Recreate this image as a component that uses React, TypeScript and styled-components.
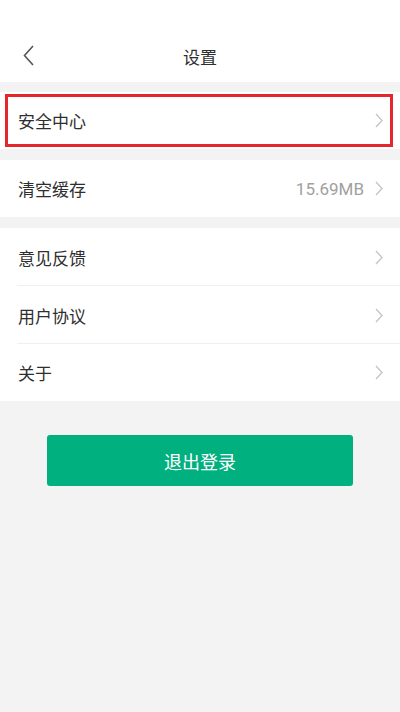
import React from 'react'
import styled, { createGlobalStyle } from 'styled-components'

const GlobalStyle = createGlobalStyle`
  html, body {
    margin: 0;
    padding: 0;
    background: #f3f3f3;
  }
  body {
    font-family: Roboto, "Noto Sans CJK SC", sans-serif;
    -webkit-font-smoothing: antialiased;
  }
`

const Page = styled.div`
  width: 400px;
  min-height: 712px;
  background: #f3f3f3;
  display: flex;
  flex-direction: column;
`

const Header = styled.header`
  height: 52px;
  padding-top: 30px;
  background: #fff;
  display: flex;
  align-items: center;
  justify-content: center;
  position: relative;
`

const BackButton = styled.button`
  position: absolute;
  left: 18px;
  top: 40px;
  width: 20px;
  height: 30px;
  border: 0;
  padding: 0;
  background: transparent;
  display: flex;
  align-items: center;
  justify-content: center;
`

const Title = styled.h1`
  margin: 0;
  font-size: 17px;
  font-weight: 400;
  color: #2e2e2e;
`

const Section = styled.section<{ gap: number }>`
  margin-top: ${({ gap }) => gap}px;
  background: #fff;
`

const Row = styled.div<{ last?: boolean }>`
  height: ${({ last }) => (last ? 57 : 58)}px;
  display: flex;
  align-items: center;
  padding: 0 17px 0 18px;
  position: relative;
  box-sizing: border-box;

  &::after {
    content: '';
    display: ${({ last }) => (last ? 'none' : 'block')};
    position: absolute;
    left: 17px;
    right: 0;
    bottom: 0;
    height: 1px;
    background: #f0f0f0;
  }
`

const Label = styled.span`
  flex: 1;
  font-size: 17px;
  color: #2e2e2e;
`

const Value = styled.span`
  font-size: 17px;
  color: #a0a0a0;
  margin-right: 11px;
`

const Highlight = styled.div`
  position: absolute;
  left: 5px;
  right: 7px;
  top: 2px;
  bottom: 2px;
  border: 3px solid #e6262d;
  pointer-events: none;
`

const LogoutButton = styled.button`
  margin: 34px auto 0;
  width: 306px;
  height: 51px;
  border: 0;
  border-radius: 3px;
  background: #00b07e;
  color: #fff;
  font-family: inherit;
  font-size: 18px;
  font-weight: 400;
  cursor: pointer;
`

const Chevron = () => (
  <svg width="8" height="15" viewBox="0 0 8 15">
    <path d="M1 1 L7 7.5 L1 14" fill="none" stroke="#c4c4c4" strokeWidth="1.3" />
  </svg>
)

const BackIcon = () => (
  <svg width="11" height="21" viewBox="0 0 11 21">
    <path d="M10 1 L1.5 10.5 L10 20" fill="none" stroke="#555" strokeWidth="1.6" />
  </svg>
)

type Item = { label: string; value?: string }

const groups: { gap: number; items: Item[]; highlight?: boolean }[] = [
  { gap: 10, items: [{ label: '安全中心' }], highlight: true },
  { gap: 11, items: [{ label: '清空缓存', value: '15.69MB' }] },
  { gap: 11, items: [{ label: '意见反馈' }, { label: '用户协议' }, { label: '关于' }] },
]

export default function App() {
  return (
    <Page>
      <GlobalStyle />
      <Header>
        <BackButton aria-label="返回">
          <BackIcon />
        </BackButton>
        <Title>设置</Title>
      </Header>
      {groups.map((g, gi) => (
        <Section key={gi} gap={g.gap}>
          {g.items.map((item, i) => (
            <Row key={item.label} last={i === g.items.length - 1}>
              <Label>{item.label}</Label>
              {item.value && <Value>{item.value}</Value>}
              <Chevron />
              {g.highlight && <Highlight />}
            </Row>
          ))}
        </Section>
      ))}
      <LogoutButton>退出登录</LogoutButton>
    </Page>
  )
}
